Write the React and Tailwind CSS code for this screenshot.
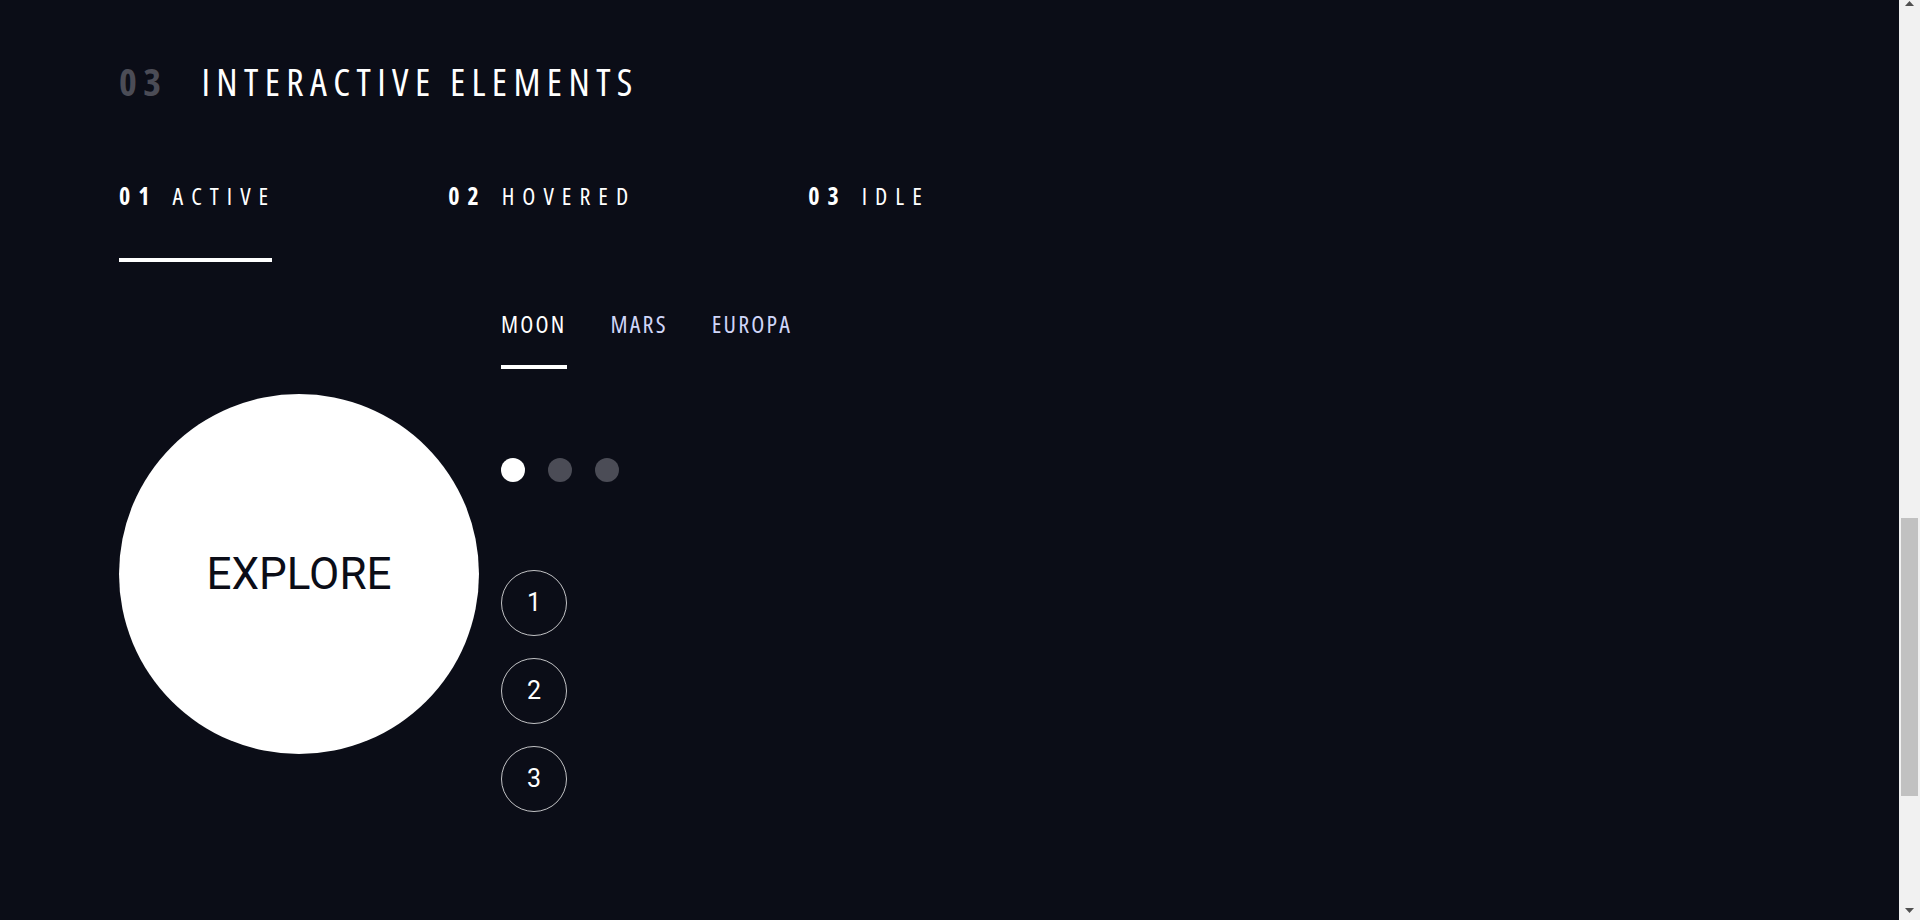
const cond = "font-['Open_Sans',sans-serif] font-stretch-condensed";

const tabs = [
  { n: "01", label: "ACTIVE", active: true },
  { n: "02", label: "HOVERED" },
  { n: "03", label: "IDLE" },
];

const planets = [
  { label: "MOON", active: true },
  { label: "MARS" },
  { label: "EUROPA" },
];

function Scrollbar() {
  return (
    <div aria-hidden="true" className="flex w-[21px] shrink-0 flex-col bg-[#f1f1f1]">
      <div className="flex h-[17px] items-start justify-center pt-[1px]">
        <svg width="9" height="5" viewBox="0 0 9 5">
          <path d="M4.5 0 L9 5 L0 5 Z" fill="#505050" />
        </svg>
      </div>
      <div className="flex-1 px-[2px] pt-[501px]">
        <div className="h-[278px] bg-[#c1c1c1]" />
      </div>
      <div className="flex h-[17px] items-start justify-center pt-[5px]">
        <svg width="9" height="5" viewBox="0 0 9 5">
          <path d="M0 0 L9 0 L4.5 5 Z" fill="#505050" />
        </svg>
      </div>
    </div>
  );
}

export default function App() {
  return (
    <div className="flex h-screen overflow-hidden bg-[#0B0D17] text-white">
      <main className="flex-1 pl-[119px] pt-[62px]">
        <h2 className={`flex items-baseline text-[38px] leading-[38px] tracking-[6.4px] ${cond}`}>
          <span className="mr-[34px] font-bold text-[#4B4C56]">03</span>
          <span>INTERACTIVE ELEMENTS</span>
        </h2>

        <div className="mt-[84px] flex gap-[176px]">
          {tabs.map((t) => (
            <div
              key={t.n}
              className={`border-b-4 pb-[50px] text-[24px] leading-[24px] tracking-[8px] ${cond} ${
                t.active ? "border-white" : "border-transparent"
              }`}
            >
              <span className="mr-[15px] font-bold">{t.n}</span>
              <span className="mr-[-4px]">{t.label}</span>
            </div>
          ))}
        </div>

        <div className="mt-[51px] flex items-start gap-[22px]">
          <div className="mt-[81px] flex size-[360px] shrink-0 items-center justify-center rounded-full bg-white text-[44px] text-[#0B0D17] font-['Roboto',sans-serif]">
            EXPLORE
          </div>

          <div className="flex flex-col">
            <div className="flex gap-[44px]">
              {planets.map((p) => (
                <div
                  key={p.label}
                  className={`border-b-4 pb-[30px] text-[24px] leading-[22px] tracking-[2.2px] ${cond} ${
                    p.active ? "border-white text-white" : "border-transparent text-[#D0D6F9]"
                  }`}
                >
                  {p.label}
                </div>
              ))}
            </div>

            <div className="mt-[89px] flex gap-[23px]">
              <span className="size-6 rounded-full bg-white" />
              <span className="size-6 rounded-full bg-[#4B4C56]" />
              <span className="size-6 rounded-full bg-[#4B4C56]" />
            </div>

            <div className="mt-[88px] flex flex-col gap-[22px]">
              {["1", "2", "3"].map((n) => (
                <div
                  key={n}
                  className="flex size-[66px] items-center justify-center rounded-full border border-white/75 text-[25px] font-['Roboto',sans-serif]"
                >
                  {n}
                </div>
              ))}
            </div>
          </div>
        </div>
      </main>
      <Scrollbar />
    </div>
  );
}
